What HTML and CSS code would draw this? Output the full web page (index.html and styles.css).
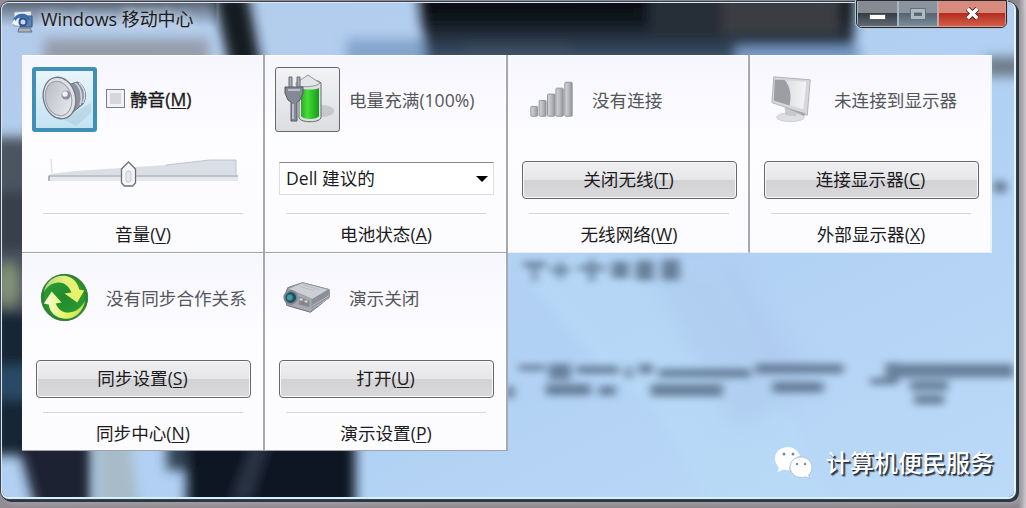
FILE: index.html
```html
<!DOCTYPE html>
<html lang="zh-CN">
<head>
<meta charset="utf-8">
<title>Windows 移动中心</title>
<link rel="stylesheet" href="styles.css">
</head>
<body>
<main class="window">
  <svg class="glass" viewBox="0 0 1014 497" preserveAspectRatio="none" aria-hidden="true">
    <defs>
      <linearGradient id="sky" x1="0" y1="0" x2="1" y2="1"><stop offset="0" stop-color="#b3cbea"/><stop offset=".6" stop-color="#b1d1f4"/><stop offset="1" stop-color="#bbdaf8"/></linearGradient>
      <linearGradient id="shade" x1="0" y1="0" x2="0" y2="1"><stop offset="0" stop-color="#30353c" stop-opacity=".65"/><stop offset="1" stop-color="#30353c" stop-opacity="0"/></linearGradient>
      <linearGradient id="night" x1="0" y1="0" x2="0" y2="1"><stop offset="0" stop-color="#0b0e14"/><stop offset=".5" stop-color="#0d1219"/><stop offset="1" stop-color="#4f6a88"/></linearGradient>
      <filter id="b3" x="-20%" y="-50%" width="140%" height="200%"><feGaussianBlur stdDeviation="4"/></filter>
      <filter id="b6" x="-50%" y="-50%" width="200%" height="200%"><feGaussianBlur stdDeviation="6"/></filter>
      <filter id="b14" x="-50%" y="-50%" width="200%" height="200%"><feGaussianBlur stdDeviation="12"/></filter>
    </defs>
    <rect width="1014" height="497" fill="url(#sky)"/>
    <g filter="url(#b6)">
      <path d="M42 36h165v30H42z" fill="#969dab"/>
      <path d="M212-10h34l14 74h-32z" fill="#141b24"/>
      <path d="M345 36h80v40h-80z" fill="#84a6cd"/>
      <path d="M414-40h440v110H426z" fill="url(#night)"/>
      <path d="M465 44h105v24H465z" fill="#3f5165"/>
      <path d="M720-20h120v52H720z" fill="#3a3d43"/>
      <path d="M648-20h70v54h-70z" fill="#252e38"/>
      <path d="M735 44h125v25H735z" fill="#7c9ecb"/>
      <path d="M985 54h45v20h-45z" fill="#6d7a88"/>
      <path d="M-10 135h42v320h-42z" fill="#4b5561"/>
      <path d="M-10 190h42v60h-42z" fill="#39414c"/>
      <path d="M-10 310h42v145h-42z" fill="#172536"/>
      <path d="M-10 365h42v34h-42z" fill="#2b4a66"/>
      <ellipse cx="6" cy="283" rx="11" ry="22" fill="#829274"/>
      <path d="M15 440h74v70H34z" fill="#1b2330"/>
      <path d="M165 440h25v30h-25z" fill="#334354"/>
      <path d="M185 440h169v70H185z" fill="#101721"/>
      <path d="M230 500l24-65h15l-20 65z" fill="#2c3645"/>
      <path d="M96 440h32l10 70H96z" fill="#a7bcc8"/>
    </g>
    <rect width="215" height="24" fill="url(#shade)"/>
    <path d="M505 255l95 110 52 40 60 100h120l-115-245z" fill="#b9dcf7" opacity=".55" filter="url(#b6)"/>
    <path d="M640 255h90l90 130-85 45z" fill="#a5bfe6" opacity=".35" filter="url(#b14)"/>
    <g filter="url(#b3)" fill="#4c6078" opacity=".72">
      <path d="M522 260h23v6h-23zm9 0h5v20h-5zM549 266h20v5h-20zm8-6h5v18h-5zM577 264h28v5h-28zm11-6h6v22h-6zM611 260h17v17h-17zM635 259h18v20h-18zM661 258h18v21h-18z"/>
      <path d="M518 364h26v6h-26zm30-1h22v16h-22zm28 2h42v8h-42zm49 1h6v12h-6zm13-3h14v10h-14zm20 5h92v9h-92zm97-5h88v10h-88zM885 362h14v18h-14zM899 363h115v14H899z"/>
      <path d="M505 385h8v13h-8zm40-2h45v12h-45zm53 2h17v10h-17zm52-2h72v13h-72zm122-2h51v11h-51zm98-4h28v7h-28zm40 3h38v10h-38zm4 14h30v10h-30z"/>
      <circle cx="1000" cy="185" r="7"/>
    </g>
  </svg>

  <header class="titlebar">
    <svg class="app-icon" viewBox="0 0 24 24">
      <path d="M3 2l17-1 2 13-4 2H3z" fill="#e6ebf1" stroke="#8f99a5"/>
      <path d="M9 6h12v11H9z" fill="#5b80b4" stroke="#3c587f"/>
      <path d="M3 11C6 4 15 3 18 10" fill="none" stroke="#3a6db0" stroke-width="3"/>
      <circle cx="12" cy="12" r="3.500" fill="#c5dcf2" stroke="#2c5590" stroke-width="2"/>
      <path d="M1 14l8 2-6-7z" fill="#eef5fa"/>
      <path d="M8 18h11l2 4H7z" fill="#aab2bc" stroke="#68727e"/>
    </svg>
    <h1 class="title">Windows 移动中心</h1>
    <div class="controls">
      <span class="control minimize"><i class="dash"></i></span>
      <span class="control maximize"><i class="square"></i></span>
      <span class="control close"><svg class="cross" viewBox="0 0 14 12"><path d="M2.500 1.500l9 9m0-9l-9 9" stroke="#5e2420" stroke-width="5"/><path d="M2.500 1.500l9 9m0-9l-9 9" stroke="#fff" stroke-width="3.200"/></svg></span>
    </div>
  </header>

  <section class="tiles">
    <article class="tile">
      <div class="status">
        <span class="icon framed selected">
          <svg class="art" viewBox="0 0 54 54">
            <defs><linearGradient id="cone" x1="0" y1="0" x2="1" y2="1"><stop offset="0" stop-color="#b4b8c1"/><stop offset="1" stop-color="#eceef2"/></linearGradient></defs>
            <path d="M25 46l28-16v10L38 53z" fill="#a9c9da" opacity=".5"/>
            <path d="M30 12l9-3c8 2 11 15 6 22l-11 9z" fill="#8c929e" stroke="#666c78"/>
            <path d="M37 10c6 4 8 14 5 22M41 10c6 5 7 13 4 20" fill="none" stroke="#d5d9e1" stroke-width="1.500"/>
            <ellipse cx="21.500" cy="25" rx="16" ry="21" transform="rotate(-14 21.500 25)" fill="#dfe1e7" stroke="#737884" stroke-width="1.300"/>
            <ellipse cx="20.500" cy="25.500" rx="13" ry="17.500" transform="rotate(-14 20.500 25.500)" fill="url(#cone)" stroke="#999eaa"/>
            <circle cx="28" cy="22" r="4.500" fill="#8b909b"/><circle cx="27" cy="21" r="2.700" fill="#f1f3f6"/>
          </svg>
        </span>
        <label class="check"><span class="box"></span><span class="strong">静音(<u>M</u>)</span></label>
      </div>
      <div class="control-row">
        <svg class="slider" viewBox="0 0 192 30">
          <path d="M2 15L28 12 118 6 162 1h26v15H2z" fill="#d9dee7"/>
          <path d="M3 0l1 14" stroke="#d5d9e0"/>
          <path d="M118 6l44-5h26v15" fill="none" stroke="#c0c6cf"/>
          <path d="M2 18h188v4H2z" fill="#e5e7ee"/>
          <path d="M1 22v-5h189" fill="none" stroke="#84888f" stroke-width="1.200"/>
          <path d="M73.500 10l7-7 7 7v14l-3 3h-8l-3-3z" fill="#f5f6f9" stroke="#6b7078" stroke-width="1.300"/>
          <rect x="78" y="12" width="5" height="11" rx="2" fill="#e6e8ed" stroke="#c3c6cd"/>
        </svg>
      </div>
      <footer class="caption">音量(<u>V</u>)</footer>
    </article>

    <article class="tile">
      <div class="status">
        <span class="icon framed">
          <svg class="art" viewBox="0 0 54 54">
            <defs><linearGradient id="cell"><stop offset="0" stop-color="#30a52c"/><stop offset=".35" stop-color="#45dd37"/><stop offset="1" stop-color="#159a1c"/></linearGradient></defs>
            <ellipse cx="41" cy="38" rx="12" ry="6" fill="#8f9298" opacity=".35"/>
            <path d="M18 9c2-3 20-3 22 1v35c-2 5-20 5-22 0z" fill="#dce1df" stroke="#666b70"/>
            <path d="M20 15c3 2 15 2 18 0v28c-2 4-16 4-18 0z" fill="url(#cell)"/>
            <path d="M15 10L27 2l12 8c-3 4-19 5-24 2z" fill="#e4e5e9" stroke="#94979e"/>
            <path d="M8 14V4h3v10m5 0V4h3v10" fill="#a9abb3" stroke="#6a6d76"/>
            <path d="M4 14h18v6l-3 7-3 2v19h-6V29l-3-2-3-7z" fill="#858895" stroke="#555864"/>
            <path d="M7 17h12M12 31v15" stroke="#bdc0ca" stroke-width="2"/>
          </svg>
        </span>
        <span class="label">电量充满(100%)</span>
      </div>
      <div class="control-row"><div class="select"><span>Dell 建议的</span><i class="arrow"></i></div></div>
      <footer class="caption">电池状态(<u>A</u>)</footer>
    </article>

    <article class="tile">
      <div class="status">
        <span class="icon">
          <svg class="art-plain" viewBox="0 0 66 66">
            <defs><linearGradient id="bar"><stop offset="0" stop-color="#d4d5d8"/><stop offset=".5" stop-color="#b9bbc0"/><stop offset="1" stop-color="#909298"/></linearGradient></defs>
            <g fill="url(#bar)" stroke="#93969c"><rect x="13" y="40" width="7" height="10" rx="1"/><rect x="21.500" y="34" width="7" height="16" rx="1"/><rect x="30" y="27.500" width="7.500" height="22.500" rx="1"/><rect x="38.500" y="21.500" width="7.500" height="28.500" rx="1"/><rect x="47.500" y="15.500" width="7.500" height="34.500" rx="1"/></g>
          </svg>
        </span>
        <span class="label">没有连接</span>
      </div>
      <div class="control-row"><button class="button">关闭无线(<u>T</u>)</button></div>
      <footer class="caption">无线网络(<u>W</u>)</footer>
    </article>

    <article class="tile">
      <div class="status">
        <span class="icon">
          <svg class="art-plain" viewBox="0 0 66 66">
            <defs><linearGradient id="screen"><stop offset="0" stop-color="#d1d2d6"/><stop offset="1" stop-color="#f5f5f7"/></linearGradient></defs>
            <ellipse cx="31" cy="51" rx="14" ry="4.500" fill="#dedfe2" stroke="#cfd0d4"/>
            <path d="M25 41l12 2v7l-11-1z" fill="#c7c9cd"/>
            <path d="M14 10l37 3-3 36-5-2-31-11z" fill="#d6d7da" stroke="#b2b4b9"/>
            <path d="M15 13l32 2-3 28-30-9z" fill="url(#screen)"/>
            <path d="M15 13h10c6 7 7 17 5 26l-16-5z" fill="#9c9ea3"/>
            <path d="M28 42l18 5-1 3z" fill="#a4a6aa"/>
          </svg>
        </span>
        <span class="label">未连接到显示器</span>
      </div>
      <div class="control-row"><button class="button">连接显示器(<u>C</u>)</button></div>
      <footer class="caption">外部显示器(<u>X</u>)</footer>
    </article>

    <article class="tile">
      <div class="status">
        <span class="icon">
          <svg class="art-plain" viewBox="0 0 66 66">
            <defs>
              <radialGradient id="globe" cx=".5" cy=".5" r=".55"><stop offset="0" stop-color="#1f8a2e"/><stop offset=".75" stop-color="#2b9a30"/><stop offset="1" stop-color="#1f6f2c"/></radialGradient>
              <linearGradient id="over"><stop offset="0" stop-color="#a9d97a"/><stop offset=".5" stop-color="#e2f07d"/><stop offset="1" stop-color="#f0f064"/></linearGradient>
              <linearGradient id="under"><stop offset="0" stop-color="#f6fbe4"/><stop offset=".5" stop-color="#e9f569"/><stop offset="1" stop-color="#b9e04e"/></linearGradient>
            </defs>
            <circle cx="33" cy="33" r="23.500" fill="url(#globe)" stroke="#3b7a3b"/>
            <path d="M12 28C14 16 24 10 33 11C41 12 46 17 48 25L53 26L46 38L33 29L40 28C37 20 31 17 25 18C19 19 15 22 12 28z" fill="url(#over)"/>
            <path d="M54 36C52 48 43 55 34 54.500C24 54 18 48 17 40L12 39L20 27L30 38L24 39C27 46 32 49 39 48C46 47 51 42 54 36z" fill="url(#under)"/>
          </svg>
        </span>
        <span class="label">没有同步合作关系</span>
      </div>
      <div class="control-row"><button class="button">同步设置(<u>S</u>)</button></div>
      <footer class="caption">同步中心(<u>N</u>)</footer>
    </article>

    <article class="tile">
      <div class="status">
        <span class="icon">
          <svg class="art-plain" viewBox="0 0 66 66">
            <path d="M10 31l3-8 15-5 27 7v8L36 48l-24-7z" fill="#a7aab1" stroke="#6a6e76"/>
            <path d="M13 24l15-6 27 7-17 10z" fill="#cdcfd6" stroke="#9699a1"/>
            <path d="M37 35l17-10v8L37 47z" fill="#8c9098"/>
            <path d="M37 42l18-11M37 45l17-11M25 22l15 4M28 20l17 5" stroke="#b9bcc2"/>
            <circle cx="16" cy="33" r="6.500" fill="#24515f" stroke="#7e8992" stroke-width="2"/>
            <circle cx="15" cy="33" r="3" fill="#4696a4"/>
            <path d="M24 32l11 4v7l-11-3z" fill="#858a92"/><path d="M25 35h3m2 2h3" stroke="#d9dce2" stroke-width="2"/><path d="M27 39h4" stroke="#a8726c" stroke-width="2"/>
          </svg>
        </span>
        <span class="label">演示关闭</span>
      </div>
      <div class="control-row"><button class="button">打开(<u>U</u>)</button></div>
      <footer class="caption">演示设置(<u>P</u>)</footer>
    </article>
  </section>

  <div class="signature">
    <svg class="chat" viewBox="0 0 38 32">
      <path d="M13 0C5.500 0 0 5 0 11.500c0 4 2 7 4 9L2.500 25l6-2.500c2 .7 4 .8 6 .8C14 15 19 10 25 9 23 3 18 0 13 0z" fill="#fff"/>
      <path d="M26 10c-6 0-11 4.500-11 10s5 10.500 11 10.500c2 0 3-.3 4.500-.8l4 1.800-.8-3.600c2-2 3.300-4.500 3.300-7.900 0-5.500-5-10-11-10z" fill="#fff" stroke="#a5b9d0" stroke-width=".8"/>
      <g fill="#7189a2"><circle cx="9" cy="7" r="1.500"/><circle cx="18" cy="7" r="1.500"/><circle cx="22" cy="17" r="1.200"/><circle cx="30" cy="17" r="1.200"/></g>
    </svg>
    <span class="signature-text">计算机便民服务</span>
  </div>
</main>
</body>
</html>
```
FILE: styles.css
```css
* { box-sizing: border-box; }

body {
  margin: 0;
  width: 1026px;
  height: 508px;
  overflow: hidden;
  padding: 2px 8px 7px 1px;
  background: linear-gradient(90deg, #918c93 0, #8b878e 1018px, #d0ccd1 1026px);
  font-family: "Open Sans", "Noto Sans CJK SC", sans-serif;
  font-size: 17.6px;
  color: #1b1b1d;
}

.window {
  position: relative;
  width: 1015px;
  height: 497px;
  border: 1px solid #d8e8f5;
  border-right: 2px solid #e4f3fc;
  border-bottom: 2px solid #d4f1fa;
  border-radius: 8px;
  box-shadow: 0 0 0 1px #39424c, 2px 2px 0 1px #2b3641, 4px 4px 4px 1px #a5a0a6;
}

.glass {
  position: absolute;
  inset: 0;
  width: 100%;
  height: 100%;
  border-radius: 7px;
}

.titlebar {
  position: relative;
  display: flex;
  height: 52px;
  padding-left: 9px;
}

.app-icon { width: 24px; height: 24px; margin-top: 7px; }

.title {
  margin: 4px 0 0 6px;
  font-size: 17.9px;
  font-weight: 400;
  line-height: 25px;
  white-space: nowrap;
  text-shadow: 0 0 8px #d3deec, 0 0 10px #d3deec;
}

.controls {
  display: flex;
  width: 151px;
  height: 28px;
  margin: -3px 7px 0 auto;
  border: 1px solid #252a30;
  border-radius: 0 0 6px 6px;
  box-shadow: 0 0 0 1px #b6c4d2;
  overflow: hidden;
}

.control {
  display: grid;
  place-items: center;
  width: 41px;
  border: 1px solid #aab4be;
  border-top: 0;
  background: linear-gradient(#858b92 0 48%, #353c44 50%, #616a74);
}

.maximize { width: 40px; background: linear-gradient(#89949e 0 48%, #566471 50%, #7c8c9b); }
.close { flex: 1; border-color: #e09a8f; background: linear-gradient(#d88b7c 0 46%, #b42e20 50%, #d25e48); }
.dash { width: 17px; height: 6px; margin-top: 6px; border: 1px solid #555c63; background: #fff; }
.square { width: 14px; height: 10px; border: 3px solid #aeb9c2; outline: 1px solid #65717c; }
.cross { width: 15px; height: 13px; }

.tiles {
  position: relative;
  display: grid;
  grid-template-columns: 243px 243px 242px 242px;
  grid-template-rows: 198px 198px;
  width: 970px;
  margin-left: 20px;
}

.tile {
  display: flex;
  flex-direction: column;
  padding: 12px 14px 0 10px;
  border-right: 2px solid #a6a8af;
  border-bottom: 1px solid #9fa2aa;
  background: linear-gradient(#f6f6fd, #fdfcff 40%, #fcfbfe);
  box-shadow: inset 0 1px #fff, inset -1px 0 #fff;
}
.tile:nth-child(4) { border-right-color: #e9f0f8; }
.tile:nth-child(3), .tile:nth-child(4) { border-bottom-color: #e5edf7; }

.status { display: flex; align-items: center; height: 65px; white-space: nowrap; }
.icon { flex: none; width: 65px; height: 65px; }
.framed { display: grid; place-items: center; border: 1px solid #65686f; border-radius: 3px; background: linear-gradient(#f3f3f6, #dcdde1); }
.selected { border: 4px solid #3f8fb6; background: linear-gradient(#e9f5fb, #c3e3f2); }
.art { width: 54px; height: 54px; }
.art-plain { display: block; width: 65px; height: 65px; }
.label { margin-left: 9px; color: #55565b; }

.check { display: flex; align-items: center; margin: -2px 0 0 9px; }
.box { width: 19px; height: 19px; margin-right: 5px; border: 1px solid #7b7e85; background: #d5d7dc; box-shadow: inset 0 0 0 3px #f1f2f5; }
.strong { font-weight: 400; -webkit-text-stroke: .35px; }

.control-row { height: 38px; margin-top: 29px; padding: 0 0 0 4px; }

.button {
  display: block;
  width: 215px;
  height: 38px;
  padding: 0 2px 3px 0;
  border: 1px solid #66676c;
  border-radius: 4px;
  background: linear-gradient(#efeff1, #e7e6e9 49%, #d3d2d5 51%, #d9d8db);
  box-shadow: inset 0 0 0 1px #f9f9fb;
  font: inherit;
  color: inherit;
}

.select {
  display: flex;
  align-items: center;
  justify-content: space-between;
  width: 215px;
  height: 33px;
  margin-top: 1px;
  padding: 0 5px 2px 6px;
  border: 1px solid #dcdce1;
  border-top-color: #85878d;
  background: #fff;
}
.arrow { border: 6px solid transparent; border-top: 6px solid #000; border-bottom: 0; margin-top: 2px; }

.slider { display: block; width: 192px; height: 30px; margin: -2px 0 0 12px; }

.caption {
  width: 200px;
  margin: 14px 0 0 11px;
  padding-top: 8px;
  border-top: 1px solid #d5d5db;
  line-height: 25px;
  text-align: center;
}

/* second row sits one pixel lower than the first */
.tile:nth-child(n+5) .control-row { margin-top: 30px; }

u { text-decoration-thickness: 1px; text-underline-offset: 2px; }

.signature {
  position: absolute;
  right: 20px;
  bottom: 17px;
  display: flex;
  align-items: center;
}
.chat { width: 38px; height: 32px; margin-right: 13px; }
.signature-text {
  font-size: 24px;
  font-weight: 500;
  line-height: 34px;
  color: #fff;
  text-shadow: 1px 1px 0 #263140, 2px 2px 1px #40505f;
}
```
